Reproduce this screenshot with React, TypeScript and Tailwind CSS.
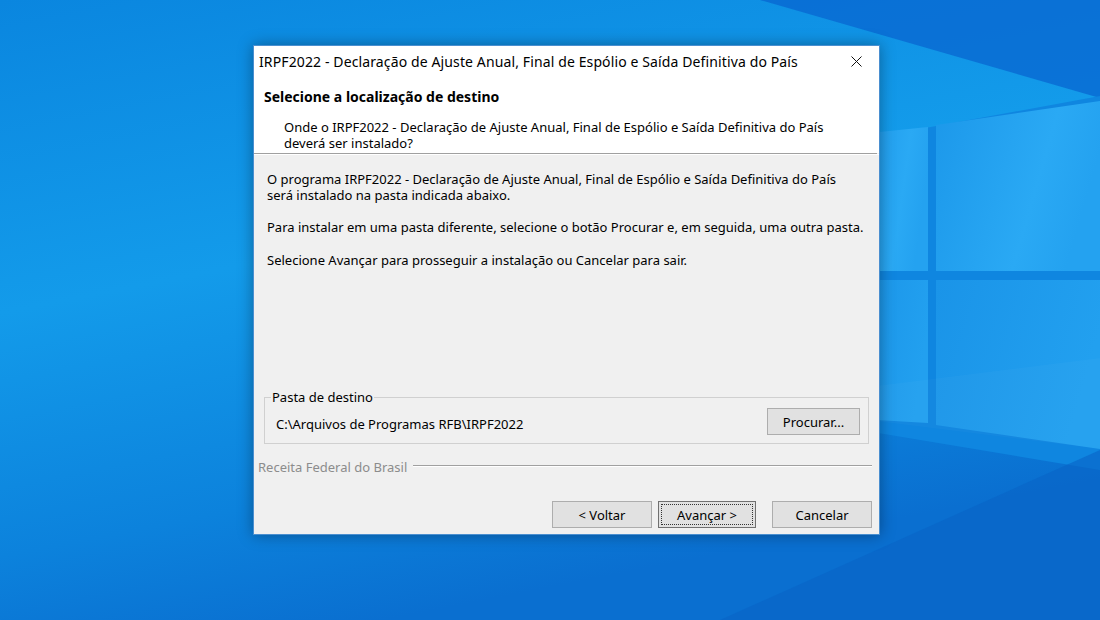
import React from "react";

function Wallpaper() {
  return (
    <svg
      className="absolute inset-0"
      width="1100"
      height="620"
      viewBox="0 0 1100 620"
    >
      <defs>
        <linearGradient id="bg" x1="0" y1="0" x2="0.35" y2="1">
          <stop offset="0" stopColor="#0a86df" />
          <stop offset="0.45" stopColor="#139bea" />
          <stop offset="0.8" stopColor="#0c82dc" />
          <stop offset="1" stopColor="#0a6fd0" />
        </linearGradient>
        <linearGradient id="pane" x1="0" y1="0" x2="1" y2="0.3">
          <stop offset="0" stopColor="#1c98ea" />
          <stop offset="0.7" stopColor="#2aa9f4" />
          <stop offset="1" stopColor="#24a2f0" />
        </linearGradient>
        <linearGradient id="paneLow" x1="0" y1="0" x2="1" y2="0.3">
          <stop offset="0" stopColor="#1a94e8" />
          <stop offset="1" stopColor="#22a0ef" />
        </linearGradient>
      </defs>
      <rect width="1100" height="620" fill="url(#bg)" />
      {/* darker wedge top right */}
      <polygon points="760,0 1100,0 1100,98" fill="#0866d0" opacity="0.75" />
      {/* logo beam */}
      <polygon points="860,140 1100,96 1100,470 860,430" fill="#0f86e0" />
      {/* darker lower right */}
      <polygon points="720,620 1100,450 1100,620" fill="#0864c6" opacity="0.6" />
      {/* panes */}
      <polygon points="860,134 928,127 928,271 860,271" fill="url(#pane)" />
      <polygon points="936,125 1100,101 1100,271 936,271" fill="url(#pane)" />
      <polygon points="860,280 928,280 928,423 860,419" fill="url(#paneLow)" />
      <polygon points="936,280 1100,280 1100,449 936,425" fill="url(#paneLow)" />
      {/* faint light streak across lower panes */}
      <polygon points="860,388 1100,358 1100,449 860,419" fill="#ffffff" opacity="0.025" />
    </svg>
  );
}

function WinButton({
  label,
  width,
  focused,
}: {
  label: string;
  width: string;
  focused?: boolean;
}) {
  return (
    <button
      type="button"
      className={
        focused
          ? `${width} flex h-[27px] items-center justify-center border border-[#707070] bg-[#e1e1e1] p-[2px]`
          : `${width} flex h-[27px] items-center justify-center border border-[#adadad] bg-[#e1e1e1]`
      }
    >
      {focused ? (
        <span className="flex h-full w-full items-center justify-center border border-dotted border-[#333]">
          {label}
        </span>
      ) : (
        label
      )}
    </button>
  );
}

export default function App() {
  return (
    <div className="relative h-[620px] w-[1100px] overflow-hidden">
      <Wallpaper />

      <div className="absolute left-[253px] top-[45px] flex h-[490px] w-[627px] flex-col border border-[#4a8fd0] bg-[#f0f0f0] text-black shadow-[0_0_14px_rgba(0,0,0,0.35)] [font-family:'Noto_Sans',sans-serif] text-[13px] leading-[16px]">
        {/* title bar */}
        <div className="flex h-[31px] items-center justify-between bg-white pl-[5px]">
          <span className="text-[14px] tracking-[0.12px] text-[#000]">
            IRPF2022 - Declaração de Ajuste Anual, Final de Espólio e Saída
            Definitiva do País
          </span>
          <div className="flex h-full w-[46px] items-center justify-center">
            <svg width="11" height="11" viewBox="0 0 11 11">
              <path d="M0.5 0.5 L10.5 10.5 M10.5 0.5 L0.5 10.5" stroke="#111" strokeWidth="1" />
            </svg>
          </div>
        </div>

        {/* header */}
        <div className="h-[76px] bg-white pt-[12px]">
          <div className="pl-[10px] text-[14px] font-bold">
            Selecione a localização de destino
          </div>
          <div className="mt-[14px] pl-[30px]">
            Onde o IRPF2022 - Declaração de Ajuste Anual, Final de Espólio e
            Saída Definitiva do País
            <br />
            deverá ser instalado?
          </div>
        </div>
        <div className="mr-[2px] h-px bg-[#a0a0a0]" />
        <div className="h-px bg-white" />

        {/* body */}
        <div className="flex flex-1 flex-col">
          <div className="flex-1 px-[13px] pt-[16px]">
            <p>
              O programa IRPF2022 - Declaração de Ajuste Anual, Final de
              Espólio e Saída Definitiva do País
              <br />
              será instalado na pasta indicada abaixo.
            </p>
            <p className="mt-[16px]">
              Para instalar em uma pasta diferente, selecione o botão Procurar
              e, em seguida, uma outra pasta.
            </p>
            <p className="mt-[17px]">
              Selecione Avançar para prosseguir a instalação ou Cancelar para
              sair.
            </p>
          </div>

          <fieldset className="mx-[10px] border border-[#d0d0d0] pb-[8px] pt-[3px]">
            <legend className="ml-[6px] px-[1px]">Pasta de destino</legend>
            <div className="flex items-center justify-between pl-[11px] pr-[8px]">
              <span className="mt-[5px]">C:\Arquivos de Programas RFB\IRPF2022</span>
              <WinButton label="Procurar..." width="w-[93px]" />
            </div>
          </fieldset>

          <div className="mt-[15px] flex items-center pl-[4px] pr-[7px]">
            <span className="text-[#8c8c8c]">Receita Federal do Brasil</span>
            <div className="ml-[6px] mt-[-3px] flex-1 border-t border-b border-t-[#a0a0a0] border-b-white" />
          </div>

          <div className="mt-[26px] flex justify-end pb-[6px] pr-[7px]">
            <WinButton label="< Voltar" width="w-[100px]" />
            <div className="ml-[6px]">
              <WinButton label="Avançar >" width="w-[98px]" focused />
            </div>
            <div className="ml-[16px]">
              <WinButton label="Cancelar" width="w-[100px]" />
            </div>
          </div>
        </div>
      </div>
    </div>
  );
}
